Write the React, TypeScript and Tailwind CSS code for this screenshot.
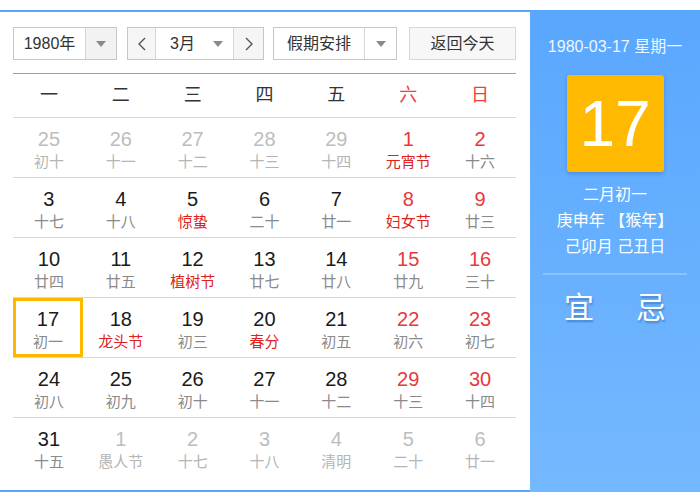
import React from 'react';

type Day = {
  n: number;
  l: string;
  out?: boolean;
  redNum?: boolean;
  redL?: boolean;
  sel?: boolean;
};

const weeks: Day[][] = [
  [
    { n: 25, l: '初十', out: true },
    { n: 26, l: '十一', out: true },
    { n: 27, l: '十二', out: true },
    { n: 28, l: '十三', out: true },
    { n: 29, l: '十四', out: true },
    { n: 1, l: '元宵节', redNum: true, redL: true },
    { n: 2, l: '十六', redNum: true },
  ],
  [
    { n: 3, l: '十七' },
    { n: 4, l: '十八' },
    { n: 5, l: '惊蛰', redL: true },
    { n: 6, l: '二十' },
    { n: 7, l: '廿一' },
    { n: 8, l: '妇女节', redNum: true, redL: true },
    { n: 9, l: '廿三', redNum: true },
  ],
  [
    { n: 10, l: '廿四' },
    { n: 11, l: '廿五' },
    { n: 12, l: '植树节', redL: true },
    { n: 13, l: '廿七' },
    { n: 14, l: '廿八' },
    { n: 15, l: '廿九', redNum: true },
    { n: 16, l: '三十', redNum: true },
  ],
  [
    { n: 17, l: '初一', sel: true },
    { n: 18, l: '龙头节', redL: true },
    { n: 19, l: '初三' },
    { n: 20, l: '春分', redL: true },
    { n: 21, l: '初五' },
    { n: 22, l: '初六', redNum: true },
    { n: 23, l: '初七', redNum: true },
  ],
  [
    { n: 24, l: '初八' },
    { n: 25, l: '初九' },
    { n: 26, l: '初十' },
    { n: 27, l: '十一' },
    { n: 28, l: '十二' },
    { n: 29, l: '十三', redNum: true },
    { n: 30, l: '十四', redNum: true },
  ],
  [
    { n: 31, l: '十五' },
    { n: 1, l: '愚人节', out: true },
    { n: 2, l: '十七', out: true },
    { n: 3, l: '十八', out: true },
    { n: 4, l: '清明', out: true },
    { n: 5, l: '二十', out: true },
    { n: 6, l: '廿一', out: true },
  ],
];

const heads = ['一', '二', '三', '四', '五', '六', '日'];

function Caret() {
  return (
    <svg width="10" height="6" viewBox="0 0 10 6">
      <path d="M0 0 L10 0 L5 6 Z" fill="#8a8a8a" />
    </svg>
  );
}

function Chevron({ dir }: { dir: 'l' | 'r' }) {
  return (
    <svg width="8" height="14" viewBox="0 0 8 14">
      <path
        d={dir === 'l' ? 'M7 1 L1 7 L7 13' : 'M1 1 L7 7 L1 13'}
        stroke="#555"
        strokeWidth="1.4"
        fill="none"
      />
    </svg>
  );
}

function Toolbar() {
  return (
    <div className="flex h-[33px] items-stretch text-[16px] text-[#333]">
      <div className="flex w-[104px] border border-[#c6c6c6]">
        <div className="flex flex-1 items-center justify-center bg-white">1980年</div>
        <div className="flex w-[31px] items-center justify-center border-l border-[#d6d6d6] bg-[#f2f2f2]">
          <Caret />
        </div>
      </div>
      <div className="ml-[10px] flex w-[137px] border border-[#c6c6c6]">
        <div className="flex w-[28px] items-center justify-center border-r border-[#d6d6d6] bg-[#f5f5f5]">
          <Chevron dir="l" />
        </div>
        <div className="flex flex-1 items-center bg-white pl-[14px]">
          <span className="flex-1">3月</span>
          <span className="mr-[10px] flex items-center">
            <Caret />
          </span>
        </div>
        <div className="flex w-[30px] items-center justify-center border-l border-[#d6d6d6] bg-[#f5f5f5]">
          <Chevron dir="r" />
        </div>
      </div>
      <div className="ml-[9px] flex w-[124px] border border-[#c6c6c6]">
        <div className="flex flex-1 items-center justify-center bg-white">假期安排</div>
        <div className="flex w-[32px] items-center justify-center border-l border-[#d6d6d6] bg-white">
          <Caret />
        </div>
      </div>
      <div className="ml-[12px] flex w-[107px] items-center justify-center border border-[#d8d8d8] bg-[#f7f7f7]">
        返回今天
      </div>
    </div>
  );
}

function Cell({ d }: { d: Day }) {
  const numColor = d.out ? 'text-[#bdbdbd]' : d.redNum ? 'text-[#e8383b]' : 'text-[#1a1a1a]';
  const lColor = d.redL && !d.out ? 'text-[#dd2222]' : d.out ? 'text-[#b5b5b5]' : 'text-[#8a8a8a]';
  return (
    <div
      className={
        'flex h-[59px] flex-col items-center ' +
        (d.sel ? 'mr-[2px] border-[3px] border-[#ffb800] pt-[6px]' : 'pt-[9px]')
      }
    >
      <div className={'text-[20px] leading-[24px] ' + numColor} style={{ fontFamily: '"Liberation Sans", Arial, sans-serif' }}>
        {d.n}
      </div>
      <div className={'mt-[1px] text-[15px] leading-[20px] ' + lColor}>{d.l}</div>
    </div>
  );
}

export default function App() {
  return (
    <div
      className="h-[500px] w-[700px] overflow-hidden bg-white pt-[10px]"
      style={{ fontFamily: '"Liberation Sans", "Noto Sans CJK SC", sans-serif' }}
    >
      <div className="flex h-[482px] border-y-2 border-[#5aa6f8]">
        <div className="w-[530px] pl-[13px] pr-[14px] pt-[15px]">
          <Toolbar />
          <div className="mt-[13px] border-t border-[#6aa9ef]">
            <div className="grid h-[44px] grid-cols-7 border-b border-[#d6d6d6] text-[18px]">
              {heads.map((h, i) => (
                <div
                  key={h}
                  className={'flex items-center justify-center ' + (i >= 5 ? 'text-[#f03c3c]' : 'text-[#333]')}
                >
                  {h}
                </div>
              ))}
            </div>
            {weeks.map((w, wi) => (
              <div
                key={wi}
                className={'grid grid-cols-7 ' + (wi < weeks.length - 1 ? 'border-b border-[#d6d6d6]' : '')}
              >
                {w.map((d, di) => (
                  <Cell key={di} d={d} />
                ))}
              </div>
            ))}
          </div>
        </div>
        <div className="-mt-[2px] -mb-[2px] flex w-[170px] flex-col items-center bg-gradient-to-b from-[#59a7fe] to-[#74b8ff] text-white">
          <div className="mt-[26px] text-[16px] leading-[22px] text-[#eef6ff]">1980-03-17 星期一</div>
          <div className="mt-[17px] flex h-[97px] w-[97px] items-center justify-center rounded-[3px] bg-[#ffb900] shadow-[0_2px_4px_rgba(0,60,140,0.25)]">
            <span className="text-[64px] leading-none">17</span>
          </div>
          <div className="mt-[10px] text-[16px] leading-[26px]">二月初一</div>
          <div className="text-[16px] leading-[26px]">庚申年 【猴年】</div>
          <div className="text-[16px] leading-[26px]">己卯月 己丑日</div>
          <div className="mt-[13px] h-[2px] w-[144px] bg-[#8cc4ff]" />
          <div className="mt-[15px] flex w-[144px] justify-around text-[30px] leading-[36px] [text-shadow:1px_2px_2px_rgba(0,50,120,0.35)]">
            <span>宜</span>
            <span>忌</span>
          </div>
        </div>
      </div>
    </div>
  );
}
